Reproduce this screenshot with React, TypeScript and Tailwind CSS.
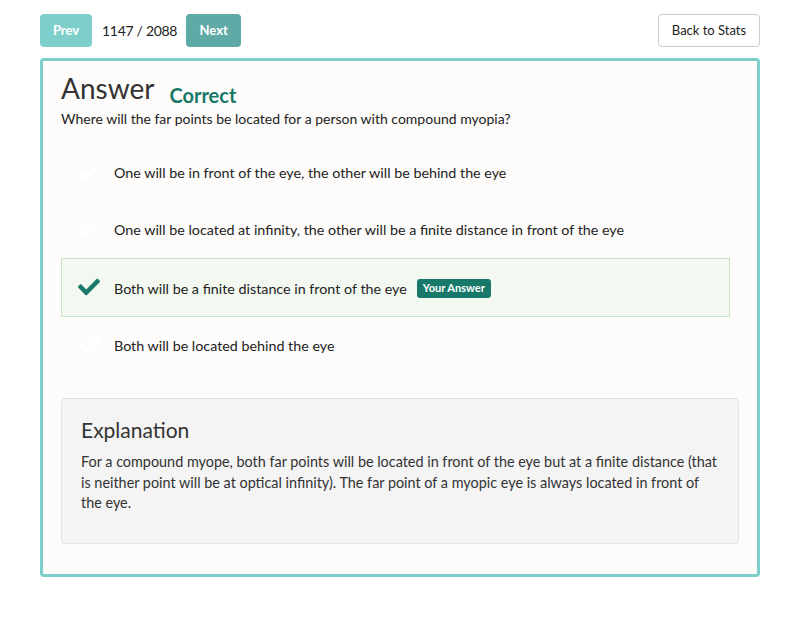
import { FC } from "react";

const Check: FC<{ className?: string }> = ({ className }) => (
  <svg viewBox="0 0 512 512" className={className} fill="currentColor">
    <path d="M173.9 439.4l-166.4-166.4c-10-10-10-26.2 0-36.2l36.2-36.2c10-10 26.2-10 36.2 0L192 312.7 432.1 72.6c10-10 26.2-10 36.2 0l36.2 36.2c10 10 10 26.2 0 36.2l-294.4 294.4c-10 10-26.2 10-36.2 0z" />
  </svg>
);

const options = [
  { text: "One will be in front of the eye, the other will be behind the eye" },
  { text: "One will be located at infinity, the other will be a finite distance in front of the eye" },
  { text: "Both will be a finite distance in front of the eye", picked: true },
  { text: "Both will be located behind the eye" },
];

const App: FC = () => {
  return (
    <main className="w-[800px] h-[643px] bg-white text-[#333] font-['Lato','Open_Sans',sans-serif]">
      <div className="px-10 pt-[14px]">
        <div className="flex items-center h-[33px]">
          <button className="h-[33px] w-[52px] rounded bg-[#7ecfcb] text-white text-[13px] font-bold">Prev</button>
          <span className="ml-[10px] text-[14px] tracking-[-0.3px] text-[#222]">1147 / 2088</span>
          <button className="ml-[9px] h-[33px] w-[55px] rounded bg-[#5faaa6] text-white text-[13px] font-bold">Next</button>
          <button className="ml-auto h-[33px] w-[102px] rounded border border-[#ccc] bg-white text-[13px] text-[#222]">Back to Stats</button>
        </div>

        <div className="mt-[11px] h-[519px] rounded-sm border-[3px] border-[#7ecfcb] bg-[#fdfcfa] px-[18px] pt-[10px]">
          <div className="flex items-end gap-[15px]">
            <h1 className="pb-[3px] text-[28px] leading-[34px] text-[#333]">Answer</h1>
            <span className="text-[20px] leading-[26px] font-bold text-[#18796a]">Correct</span>
          </div>
          <p className="mt-[1px] text-[14px] leading-[20px] text-[#222]">Where will the far points be located for a person with compound myopia?</p>

          <div className="mt-[15px] flex flex-col w-[669px]">
            {options.map((o) => (
              <div
                key={o.text}
                className={
                  o.picked
                    ? "flex items-center h-[59px] border border-[#c9e3c5] bg-[#f3f9f1] pl-[16px] pt-[2px]"
                    : "flex items-center h-[57px] border border-transparent pl-[16px]"
                }
              >
                <Check className={o.picked ? "w-[22px] h-[22px] text-[#18796a] -mt-[4px]" : "w-[22px] h-[22px] text-white"} />
                <span className="ml-[14px] text-[14.3px] text-[#222]">{o.text}</span>
                {o.picked && (
                  <span className="ml-[10px] rounded-[3px] bg-[#18796a] px-[6px] py-[1px] text-[11px] font-bold text-white">Your Answer</span>
                )}
              </div>
            ))}
          </div>

          <div className="mt-[24px] h-[146px] w-[678px] rounded border border-[#e3e3e3] bg-[#f4f4f4] px-[19px] pt-[16px]">
            <h2 className="text-[21px] leading-[30px] text-[#333]">Explanation</h2>
            <p className="mt-[7px] text-[14.4px] leading-[20.5px] text-[#333]">
              For a compound myope, both far points will be located in front of the eye but at a finite distance (that is neither point will be at optical infinity). The far point of a myopic eye is always located in front of the eye.
            </p>
          </div>
        </div>
      </div>
    </main>
  );
};

export default App;
